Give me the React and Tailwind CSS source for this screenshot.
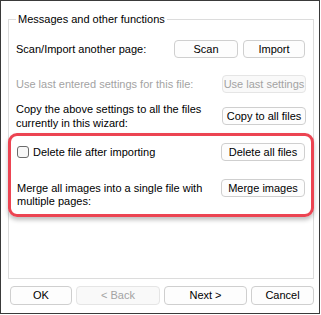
import React from 'react';

const font = { fontFamily: '"Liberation Sans", Arial, sans-serif' };

const Button = ({ children, disabled, className = '' }) => (
  <button
    className={`h-[18px] whitespace-nowrap rounded-[4px] border text-[11px] leading-none ${
      disabled ? 'border-[#e5e5e5] bg-[#f9f9f9] text-[#a3a3a3]' : 'border-[#cfcfcf] bg-[#fdfdfd] text-black'
    } ${className}`}>
    {children}
  </button>
);

const App = () => {
  return (
    <div className="w-[321px] h-[315px] bg-white" style={font}>
      <div className="w-[320px] h-[314px] border border-[#3a3a3a] flex flex-col text-[11px] text-black">
        <fieldset className="mt-[11px] ml-[7px] w-[306px] h-[267px] border border-[#dcdcdc] px-[7px]">
          <legend className="px-[2px] leading-[14px]">Messages and other functions</legend>
          <div className="mt-[14px] flex items-center justify-between">
            <span>Scan/Import another page:</span>
            <div className="flex gap-[5px] mr-[1px]">
              <Button className="w-[64px]">Scan</Button>
              <Button className="w-[62px]">Import</Button>
            </div>
          </div>
          <div className="mt-[17px] flex items-center justify-between">
            <span className="text-[#a3a3a3]">Use last entered settings for this file:</span>
            <Button disabled className="w-[84px]">Use last settings</Button>
          </div>
          <div className="mt-[9px] flex items-center justify-between">
            <span className="leading-[14px]">
              Copy the above settings to all the files
              <br />
              currently in this wizard:
            </span>
            <Button className="w-[84px]">Copy to all files</Button>
          </div>
          <div className="mt-[3px] -mx-[8px] h-[84px] rounded-[9px] border-[3px] border-[#ec4452] shadow-[0_3px_4px_rgba(0,0,0,0.25)] px-[6px] pt-[7px]">
            <div className="flex items-center justify-between">
              <label className="flex items-center gap-[4px]">
                <span className="w-[12px] h-[12px] rounded-[3px] border border-[#6b6b6b] bg-[#f7f7f7]" />
                <span>Delete file after importing</span>
              </label>
              <Button className="w-[84px]">Delete all files</Button>
            </div>
            <div className="mt-[18px] flex items-start justify-between">
              <span className="mt-[3px] leading-[13px]">
                Merge all images into a single file with
                <br />
                multiple pages:
              </span>
              <Button className="w-[84px]">Merge images</Button>
            </div>
          </div>
        </fieldset>
        <div className="mt-[7px] ml-[9px] flex gap-[4px]">
          <Button className="w-[62px] h-[19px]">OK</Button>
          <Button disabled className="w-[84px] h-[19px]">&lt; Back</Button>
          <Button className="w-[83px] h-[19px]">Next &gt;</Button>
          <Button className="w-[63px] h-[19px]">Cancel</Button>
        </div>
      </div>
    </div>
  );
};

export default App;
